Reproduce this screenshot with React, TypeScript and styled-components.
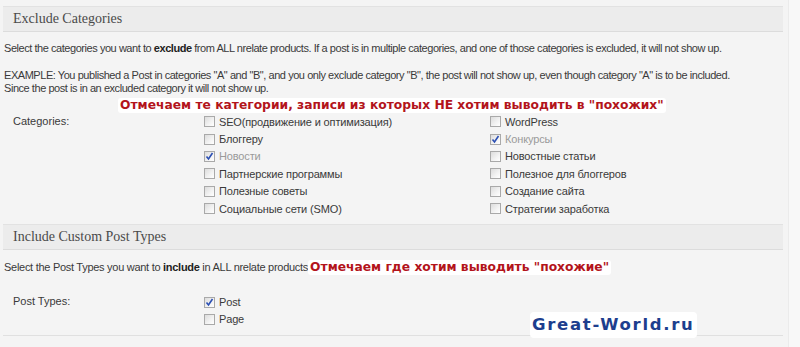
import React from "react";
import styled, { createGlobalStyle } from "styled-components";

const GlobalStyle = createGlobalStyle`
  html, body { margin: 0; padding: 0; }
  body {
    background: #f8f8f8;
    font-family: "Liberation Sans", Arial, sans-serif;
    color: #333;
    overflow: hidden;
  }
`;

const Page = styled.div`
  position: relative;
  width: 789px;
  height: 347px;
  background: #f4f4f4;
  border-right: 1px solid #ebebeb;
  padding: 6px 0 0 3px;
  box-sizing: border-box;
`;

const Header = styled.div<{ $mt?: number }>`
  width: 780px;
  height: 26px;
  margin-top: ${(p) => p.$mt ?? 0}px;
  box-sizing: border-box;
  background: #ececec;
  border-top: 1px solid #e2e2e2;
  border-bottom: 1px solid #dcdcdc;
  display: flex;
  align-items: center;
  padding-left: 10px;
  font-family: "Liberation Serif", Georgia, serif;
  font-size: 14px;
  color: #4a4a4a;
`;

const Text = styled.p<{ $mt: number; $ls?: number }>`
  margin: ${(p) => p.$mt}px 0 0 1px;
  font-size: 11px;
  line-height: 13px;
  letter-spacing: ${(p) => p.$ls ?? -0.45}px;
  color: #3a3a3a;
  white-space: nowrap;
  b { color: #222; }
`;

const Note = styled.span`
  display: inline-block;
  font-family: "DejaVu Sans", Verdana, sans-serif;
  font-weight: bold;
  font-size: 12.3px;
  letter-spacing: 0;
  color: #b3141b;
  background: #fff;
  border-radius: 3px;
  padding: 0 2px;
  line-height: 15px;
`;

const NoteLine = styled.div`
  margin: 0 0 0 115px;
  height: 15px;
`;

const Form = styled.div<{ $mt: number }>`
  display: grid;
  grid-template-columns: 191px 286px 290px;
  margin: ${(p) => p.$mt}px 0 0 10px;
  font-size: 11px;
`;

const Label = styled.div`
  line-height: 17.4px;
  color: #3a3a3a;
`;

const Options = styled.div`
  display: flex;
  flex-direction: column;
`;

const Option = styled.label<{ $muted?: boolean }>`
  display: flex;
  align-items: center;
  gap: 4px;
  height: 17.4px;
  color: ${(p) => (p.$muted ? "#9a9a9a" : "#3a3a3a")};
  font-size: 11px;
  letter-spacing: -0.15px;
`;

const Box = styled.span`
  width: 11px;
  height: 11px;
  box-sizing: border-box;
  border: 1px solid #a9a9a9;
  background: linear-gradient(135deg, #dcdcdc 0%, #f3f3f3 60%, #fff 100%);
  display: inline-flex;
  align-items: center;
  justify-content: center;
`;

const Divider = styled.div<{ $mt: number }>`
  width: 780px;
  height: 1px;
  background: #e0e0e0;
  margin-top: ${(p) => p.$mt}px;
`;

const Watermark = styled.div`
  position: absolute;
  left: 530px;
  top: 312px;
  padding: 0 2px;
  background: #fff;
  border-radius: 4px;
  font-family: "DejaVu Sans", Verdana, sans-serif;
  font-weight: bold;
  font-size: 16.5px;
  letter-spacing: 1.7px;
  line-height: 26px;
  color: #1d3e8e;
`;

const Check = () => (
  <svg width="9" height="9" viewBox="0 0 9 9">
    <path d="M1.5 4.5 L3.5 7 L7.5 1" fill="none" stroke="#2b4fb3" strokeWidth="1.6" />
  </svg>
);

type Item = { label: string; checked?: boolean; muted?: boolean };

const CheckItem = ({ label, checked, muted }: Item) => (
  <Option $muted={muted}>
    <Box>{checked && <Check />}</Box>
    {label}
  </Option>
);

const col1: Item[] = [
  { label: "SEO(продвижение и оптимизация)" },
  { label: "Блоггеру" },
  { label: "Новости", checked: true, muted: true },
  { label: "Партнерские программы" },
  { label: "Полезные советы" },
  { label: "Социальные сети (SMO)" },
];

const col2: Item[] = [
  { label: "WordPress" },
  { label: "Конкурсы", checked: true, muted: true },
  { label: "Новостные статьи" },
  { label: "Полезное для блоггеров" },
  { label: "Создание сайта" },
  { label: "Стратегии заработка" },
];

export default function App() {
  return (
    <>
      <GlobalStyle />
      <Page>
        <Header>Exclude Categories</Header>
        <Text $mt={10}>
          Select the categories you want to <b>exclude</b> from ALL nrelate products. If a post is in multiple
          categories, and one of those categories is excluded, it will not show up.
        </Text>
        <Text $mt={14}>
          EXAMPLE: You published a Post in categories "A" and "B", and you only exclude category "B", the post will not
          show up, even though category "A" is to be included.
          <br />
          Since the post is in an excluded category it will not show up.
        </Text>
        <NoteLine>
          <Note>Отмечаем те категории, записи из которых НЕ хотим выводить в "похожих"</Note>
        </NoteLine>
        <Form $mt={3}>
          <Label>Categories:</Label>
          <Options>
            {col1.map((i) => (
              <CheckItem key={i.label} {...i} />
            ))}
          </Options>
          <Options>
            {col2.map((i) => (
              <CheckItem key={i.label} {...i} />
            ))}
          </Options>
        </Form>
        <Header $mt={7}>Include Custom Post Types</Header>
        <Text $mt={10} $ls={-0.28}>
          Select the Post Types you want to <b>include</b> in ALL nrelate products
          <Note>Отмечаем где хотим выводить "похожие"</Note>
        </Text>
        <Form $mt={18}>
          <Label>Post Types:</Label>
          <Options>
            <CheckItem label="Post" checked />
            <CheckItem label="Page" />
          </Options>
        </Form>
        <Divider $mt={7} />
        <Watermark>Great-World.ru</Watermark>
      </Page>
    </>
  );
}
